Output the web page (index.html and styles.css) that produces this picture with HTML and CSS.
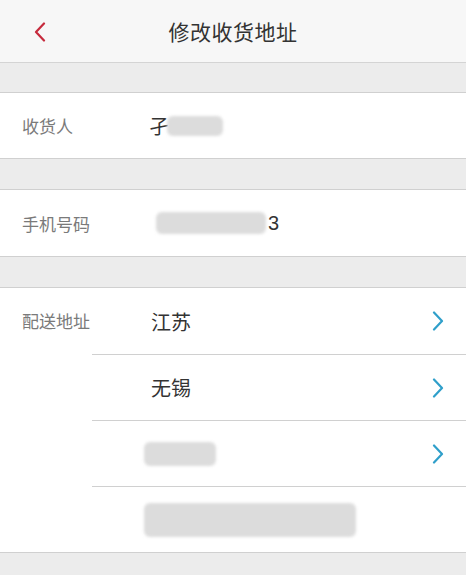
FILE: index.html
```html
<!DOCTYPE html>
<html lang="zh-CN">
<head>
    <meta charset="UTF-8">
    <meta name="viewport" content="width=device-width, initial-scale=1.0">
    <title>修改收货地址</title>
    <link rel="stylesheet" href="styles.css">
</head>
<body>
    <header class="nav-bar">
        <span class="nav-back">
            <svg width="12" height="20" viewBox="0 0 12 20"><path d="M10 1.5 L2 10 L10 18.5" fill="none" stroke="#c62a3c" stroke-width="2.2" stroke-linecap="round" stroke-linejoin="round"/></svg>
        </span>
        <h1 class="nav-title">修改收货地址</h1>
    </header>

    <div class="band band-first"></div>

    <section class="group">
        <div class="field">
            <span class="field-label">收货人</span>
            <span class="field-value">孑<span class="mask mask-name"></span></span>
        </div>
    </section>

    <div class="band"></div>

    <section class="group">
        <div class="field field-tall">
            <span class="field-label">手机号码</span>
            <span class="field-value"><span class="mask mask-phone"></span>3</span>
        </div>
    </section>

    <div class="band"></div>

    <section class="group address">
        <span class="field-label address-label">配送地址</span>
        <div class="address-rows">
            <div class="addr-row">
                <span class="field-value">江苏</span>
                <span class="chevron"><svg width="12" height="20" viewBox="0 0 12 20"><path d="M2 1.5 L10 10 L2 18.5" fill="none" stroke="#2f9fca" stroke-width="2.2" stroke-linecap="round" stroke-linejoin="round"/></svg></span>
            </div>
            <div class="addr-row">
                <span class="field-value">无锡</span>
                <span class="chevron"><svg width="12" height="20" viewBox="0 0 12 20"><path d="M2 1.5 L10 10 L2 18.5" fill="none" stroke="#2f9fca" stroke-width="2.2" stroke-linecap="round" stroke-linejoin="round"/></svg></span>
            </div>
            <div class="addr-row">
                <span class="field-value"><span class="mask mask-area"></span></span>
                <span class="chevron"><svg width="12" height="20" viewBox="0 0 12 20"><path d="M2 1.5 L10 10 L2 18.5" fill="none" stroke="#2f9fca" stroke-width="2.2" stroke-linecap="round" stroke-linejoin="round"/></svg></span>
            </div>
            <div class="addr-row">
                <span class="field-value"><span class="mask mask-street"></span></span>
            </div>
        </div>
    </section>

    <div class="band band-last"></div>
</body>
</html>
```

FILE: styles.css
```css
body {
    margin: 0;
    background-color: #ececec;
    font-family: "Noto Sans CJK SC", "Liberation Sans", sans-serif;
    color: #333;
}
.nav-bar {
    height: 62px;
    background-color: #f7f7f7;
    border-bottom: 1px solid #d4d4d4;
    display: flex;
    align-items: center;
    justify-content: center;
    position: relative;
}
.nav-back {
    position: absolute;
    left: 34px;
    top: 22px;
    display: flex;
}
.nav-title {
    margin: 0;
    font-size: 21px;
    font-weight: normal;
    color: #333;
    letter-spacing: 0.5px;
}
.band {
    height: 30px;
    background-color: #ececec;
}
.band-first {
    height: 29px;
}
.band-last {
    height: 21px;
}
.group {
    background-color: #fff;
    border-top: 1px solid #d0d0d0;
    border-bottom: 1px solid #d0d0d0;
}
.field {
    height: 65px;
    display: flex;
    align-items: center;
}
.field-tall {
    height: 66px;
}
.field-label {
    width: 92px;
    box-sizing: border-box;
    padding-left: 22px;
    font-size: 17px;
    color: #7a7a7a;
    flex-shrink: 0;
}
.field-value {
    padding-left: 59px;
    font-size: 20px;
    color: #333;
    display: flex;
    align-items: center;
    font-family: "Liberation Sans", "Noto Sans CJK SC", sans-serif;
}
.field .field-value {
    padding-left: 57px;
}
.mask {
    display: inline-block;
    background-color: #dcdcdc;
    border-radius: 6px;
    filter: blur(1.5px);
}
.mask-name {
    width: 56px;
    height: 20px;
    margin-left: -2px;
}
.mask-phone {
    width: 110px;
    height: 22px;
    margin-left: 7px;
    margin-right: 2px;
}
.mask-area {
    width: 72px;
    height: 24px;
    margin-left: -7px;
}
.mask-street {
    width: 212px;
    height: 34px;
    margin-left: -7px;
}
.address {
    display: flex;
    align-items: flex-start;
}
.address-label {
    line-height: 66px;
}
.address-rows {
    flex: 1;
}
.addr-row {
    height: 65px;
    display: flex;
    align-items: center;
    justify-content: space-between;
    border-top: 1px solid #d0d0d0;
}
.addr-row:first-child {
    height: 66px;
    border-top: none;
}
.addr-row .field-value {
    font-family: "Noto Sans CJK SC", sans-serif;
}
.chevron {
    display: flex;
    margin-right: 22px;
}
```
